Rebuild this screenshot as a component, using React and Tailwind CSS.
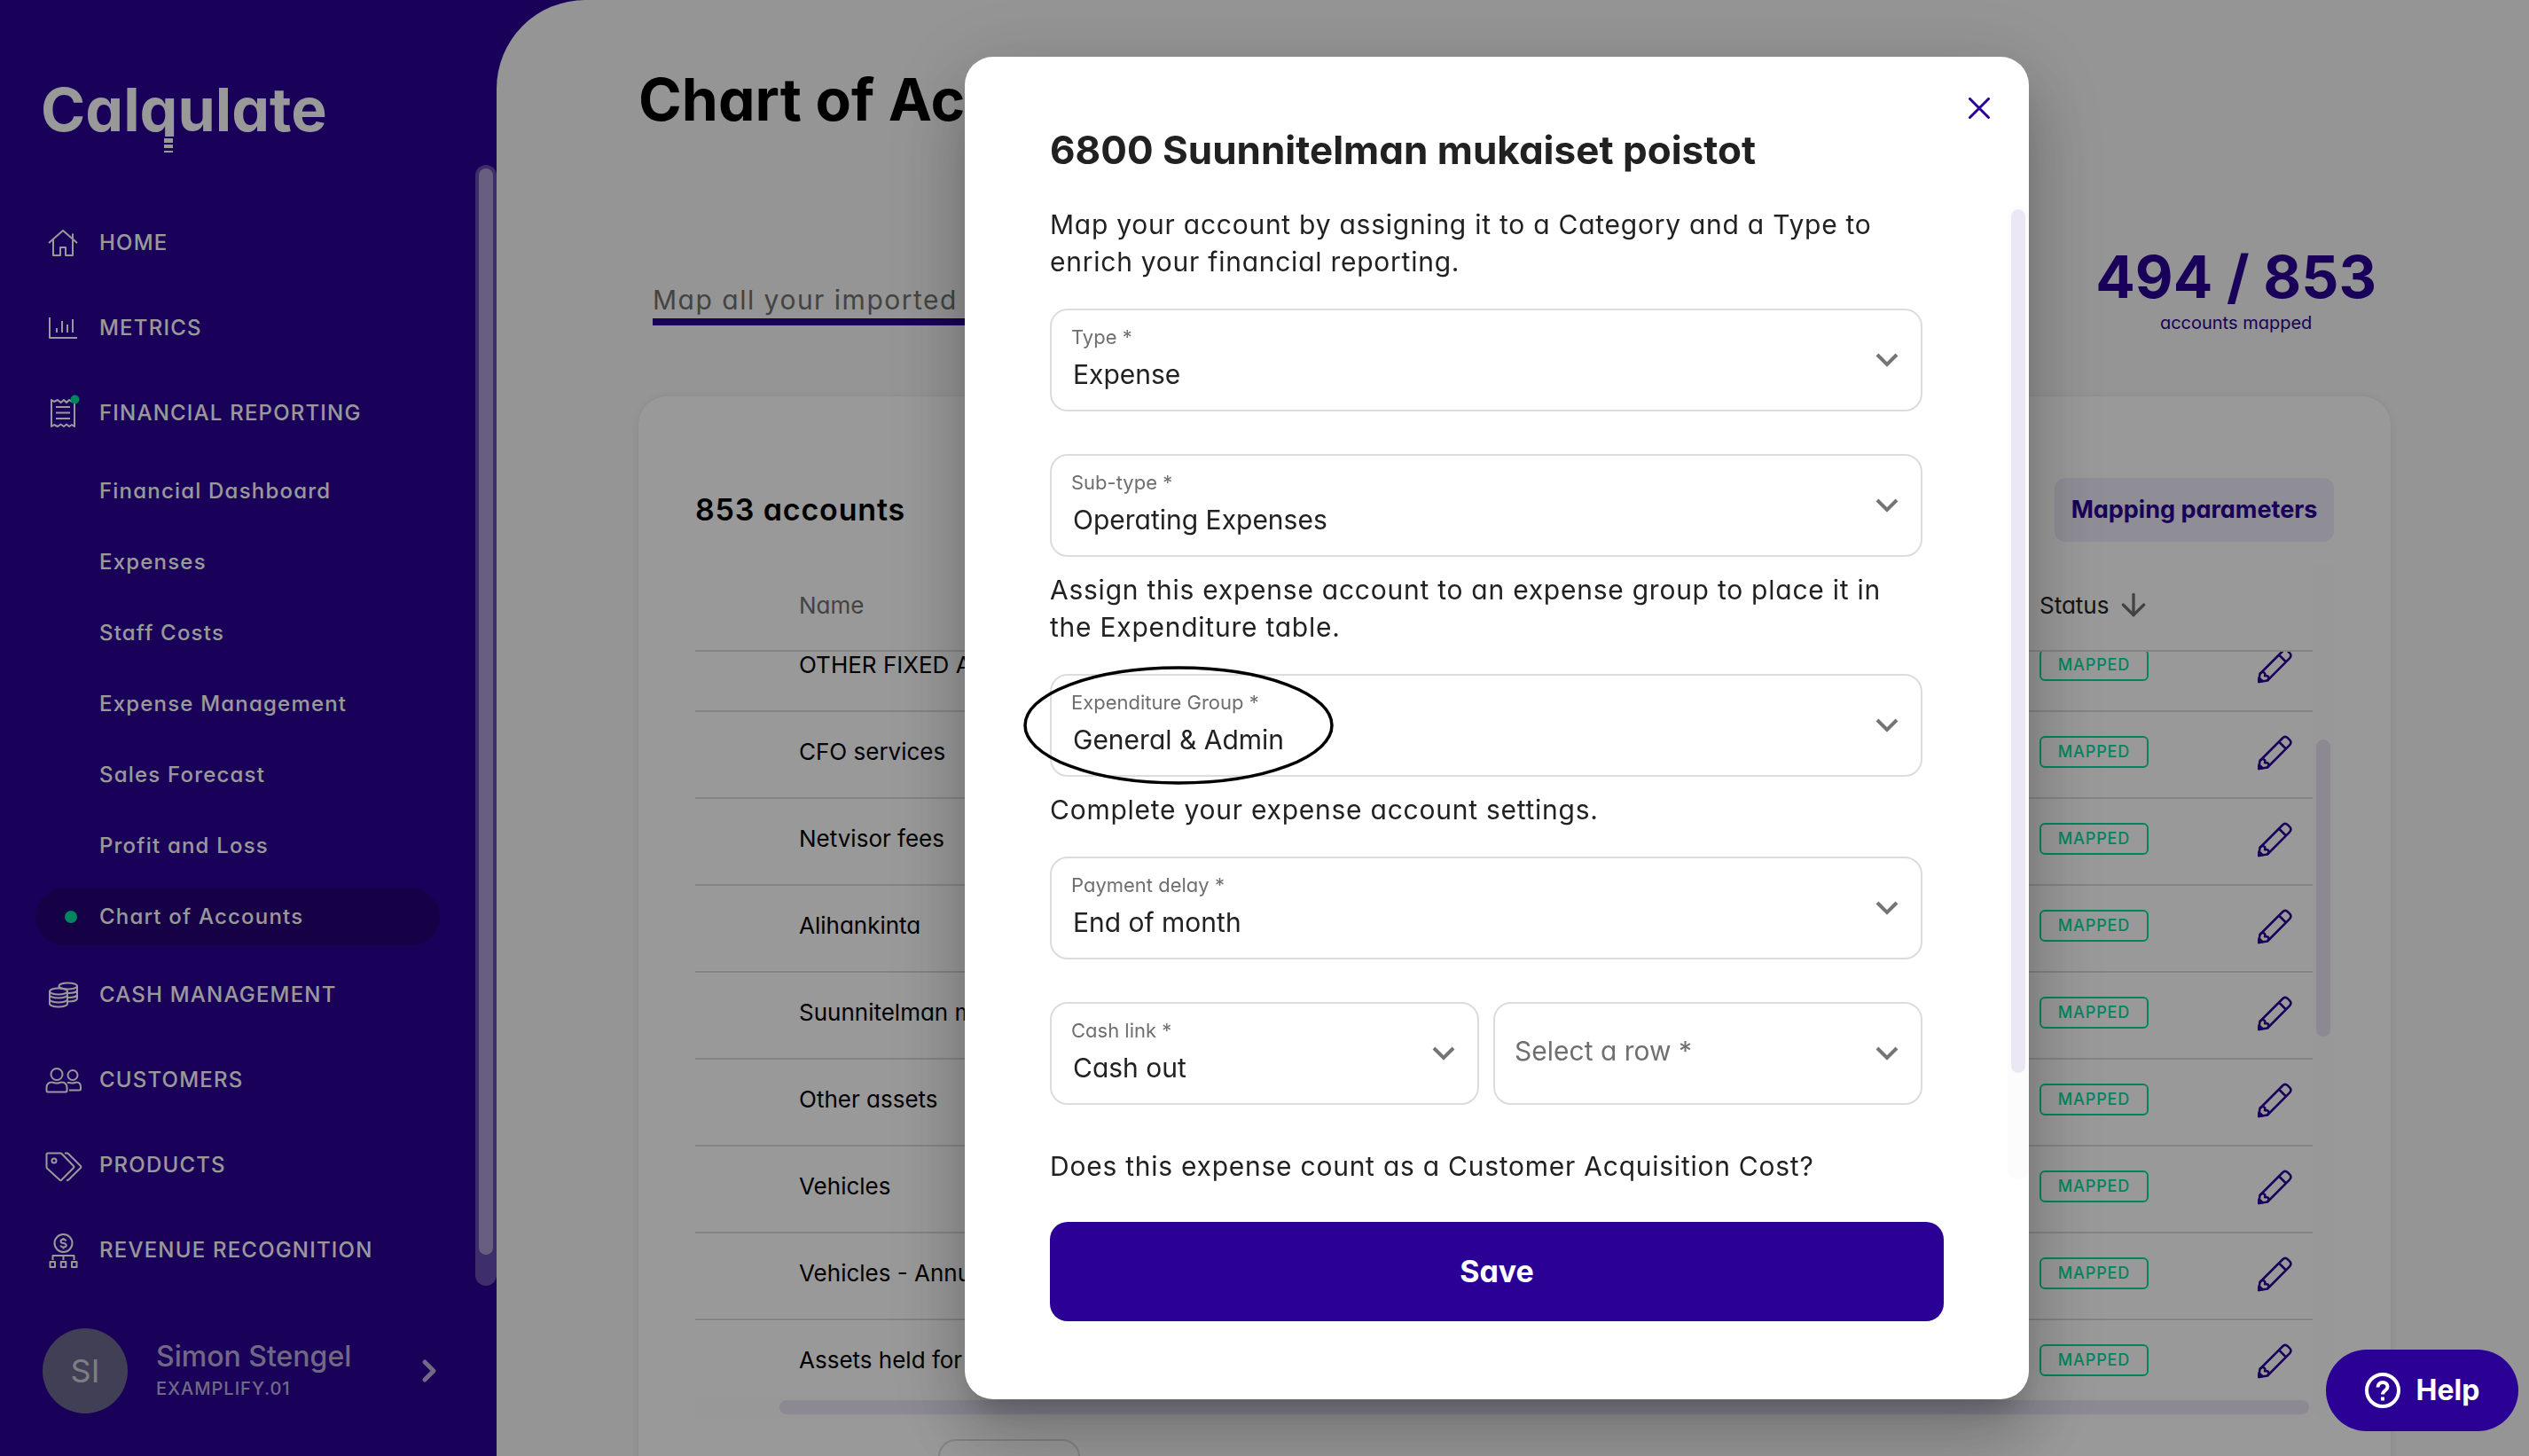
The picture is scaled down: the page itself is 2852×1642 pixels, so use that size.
import { useEffect, useRef } from "react"
import { ArrowDown, ChevronRight } from "lucide-react"

const reports = [
    'Financial Dashboard',
    'Expenses',
    'Staff Costs',
    'Expense Management',
    'Sales Forecast',
    'Profit and Loss',
    'Chart of Accounts',
]

const accounts = [
    'OTHER FIXED ASSETS',
    'CFO services',
    'Netvisor fees',
    'Alihankinta',
    'Suunnitelman muut',
    'Other assets',
    'Vehicles',
    'Vehicles - Annual',
    'Assets held for sale',
]

function Icon({ children }) {
    return (
        <svg viewBox="0 0 40 40" className="size-10 overflow-visible" fill="none" stroke="currentColor" strokeWidth="2" strokeLinejoin="round" aria-hidden="true">
            {children}
        </svg>
    )
}

const HomeIcon = () => (
    <Icon>
        <path d="M4 20 20 6l16 14M31 15.500V9.500M9 16.500V34h8v-9h6v9h8V16.500" />
    </Icon>
)

const MetricsIcon = () => (
    <Icon>
        <path d="M5 8v23h31M13 20v5M19 12v13M25 16v9M31 10v15" />
    </Icon>
)

const ReportIcon = () => (
    <Icon>
        <path d="M7 35V5l3 2 4-2 3.500 3L21 5l3 3 3-3 3 2 3-2v30l-3-2-3 2-3-2.500-3 2.500-3.500-2.500L14 35l-4-2zM12 13h16M12 19.500h16M12 26h16" />
        <circle cx="33.500" cy="4.500" r="5" fill="#00de9f" stroke="none" />
    </Icon>
)

const CashIcon = () => (
    <Icon>
        <ellipse cx="15" cy="16" rx="10" ry="3.500" />
        <path d="M5 16v14c0 2 4.500 3.500 10 3.500s10-1.500 10-3.500V16M5 20c0 2 4.500 3.500 10 3.500s10-1.500 10-3.500M5 25c0 2 4.500 3.500 10 3.500s10-1.500 10-3.500" />
        <path d="M15.500 12v-2c0-2 4.500-3.500 10.200-3.500S36 8 36 10v14c0 2-4 3.500-10 3.500M15.500 10c0 2 4.500 3.500 10.200 3.500S36 12 36 10M36 14.500c0 2-4 3.500-10 3.500M36 19.500c0 2-4 3.500-10 3.500" />
    </Icon>
)

const CustomersIcon = () => (
    <Icon>
        <circle cx="13" cy="13.500" r="6.500" />
        <path d="M1.500 32v-3c0-5 3-6.500 6-6.500 2 0 3 1 5.500 1s3.500-1 5.500-1c3 0 6 1.500 6 6.500v3c0 1-.500 1.500-1.500 1.500H3c-1 0-1.500-.500-1.500-1.500z" />
        <circle cx="31" cy="14.500" r="5.500" />
        <path d="M25 23c2.500-.500 4 .500 6 .500s2.500-1 4.500-1c3 0 4.500 2 4.500 5.500v2c0 1-.500 1.500-1.500 1.500H27" />
    </Icon>
)

const ProductsIcon = () => (
    <Icon>
        <path d="M1.500 22V8c0-1 .500-1.500 1.500-1.500h14c1 0 1.500.300 2 1l13 13.500c.800.800.800 1.200 0 2L18.500 36.500c-.800.800-1.500.800-2.300 0L2.500 24c-.700-.700-1-1.200-1-2z" />
        <circle cx="10" cy="15" r="2.500" />
        <path d="M22 6.500h2.500c.800 0 1.200.300 1.700.800L40 21c.700.700.700 1.300 0 2L26.500 36.300c-.700.700-1.500 1-2.500 1" />
    </Icon>
)

const RevenueIcon = () => (
    <Icon>
        <circle cx="20.500" cy="12" r="10" />
        <path d="M23.500 9.500c-.500-1.200-1.500-1.700-3-1.700-1.800 0-3 .800-3 2.100 0 3 6.200 1.300 6.200 4.300 0 1.300-1.300 2.200-3.200 2.200-1.700 0-2.800-.600-3.300-1.900M20.500 6v2M20.500 16.400v2" />
        <path d="M8.500 31v-5h24v5M20.500 25v6M5.500 33H11v6H5.500zM17.800 33h5.500v6h-5.500zM30 33h5.500v6H30z" />
    </Icon>
)

const PencilIcon = () => (
    <svg viewBox="0 0 40 40" className="size-10 overflow-visible" fill="none" stroke="currentColor" strokeWidth="2.500" strokeLinejoin="round" aria-hidden="true">
        <path d="M4.500 30 30 4.500c1.800-1.800 4-2 5.800-.300l2.500 2.500c1.600 1.700 1.500 3.600-.300 5.600L13 37.500 3.300 39zM26 8.500l8 8" />
        <path d="M4.500 30c1.500-2 3.500-2.500 4.700-1.500 1.400 1 1.400 2.500.800 3.700h2.500c2 0 2.500 3 .500 5.300" />
        <path d="M3.500 34.500 7.500 38l-4.200 1z" fill="currentColor" />
    </svg>
)

const Chevron = () => (
    <svg viewBox="0 0 26 16" className="h-4 w-[26px] shrink-0 text-[#757575]" fill="none" stroke="currentColor" strokeWidth="4" aria-hidden="true">
        <path d="M2 2l11 11L24 2" />
    </svg>
)

function NavItem({ icon, label }) {
    return (
        <a href="#" className="flex h-24 items-center gap-[21px] pl-[51px] text-2xl font-medium tracking-wider">
            {icon}
            {label}
        </a>
    )
}

function Sidebar() {
    return (
        <aside className="flex w-[560px] shrink-0 flex-col text-white">
            <div className="h-[186px] shrink-0 pt-[82px] pl-[46px]">
                <p className="text-[68px] leading-[82px] font-bold">
                    Cal
                    <span className="relative">
                        q
                        <svg viewBox="0 0 14 20" className="absolute right-[3px] bottom-[-10px] h-5 w-3.5" aria-hidden="true">
                            <path d="M0 0h14v20H0z" fill="#2a0095" />
                            <path d="M2 2h10v5H2zM2 9h10v4H2zM2 16h10v2H2z" fill="#fff" />
                        </svg>
                    </span>
                    ulate
                </p>
            </div>
            <div className="flex min-h-0 flex-1">
                <nav className="flex-1 overflow-hidden pt-10">
                    <NavItem icon={<HomeIcon />} label="HOME" />
                    <NavItem icon={<MetricsIcon />} label="METRICS" />
                    <NavItem icon={<ReportIcon />} label="FINANCIAL REPORTING" />
                    {reports.map((name) => (
                        <div key={name} className="flex h-20 items-center pr-10 pl-10">
                            <a
                                href="#"
                                className={`flex h-16 flex-1 items-center rounded-full pl-[33px] text-2xl font-medium tracking-wider ${name === 'Chart of Accounts' ? 'bg-[#250075]' : ''}`}
                            >
                                <span className={`mr-[25px] size-3.5 rounded-full ${name === 'Chart of Accounts' ? 'bg-[#00de9f]' : ''}`} />
                                {name}
                            </a>
                        </div>
                    ))}
                    <NavItem icon={<CashIcon />} label="CASH MANAGEMENT" />
                    <NavItem icon={<CustomersIcon />} label="CUSTOMERS" />
                    <NavItem icon={<ProductsIcon />} label="PRODUCTS" />
                    <NavItem icon={<RevenueIcon />} label="REVENUE RECOGNITION" />
                </nav>
                <div className="w-6 rounded-full bg-white/30 px-1 pt-1 pb-[35px]">
                    <div className="h-full rounded-full bg-white/45" />
                </div>
            </div>
            <button className="flex h-48 shrink-0 items-center pr-14 pl-12 text-left text-white/70">
                <span className="flex size-24 items-center justify-center rounded-full bg-[#6b698e] text-4xl">SI</span>
                <span className="ml-8 flex-1">
                    <span className="block text-[32px] leading-10 font-medium">Simon Stengel</span>
                    <span className="block text-xl leading-8 font-medium tracking-wider">EXAMPLIFY.01</span>
                </span>
                <ChevronRight className="size-10" strokeWidth={3} />
            </button>
        </aside>
    )
}

function AccountsTable() {
    const scroller = useRef(null)

    useEffect(() => {
        scroller.current.scrollTop = 30
    }, [])

    return (
        <div className="mt-6 flex">
            <div className="min-w-0 flex-1">
                <div ref={scroller} className="h-[940px] overflow-y-auto [scrollbar-width:none]">
                    <table className="w-full table-fixed border-separate border-spacing-0 text-left text-[26px]">
                        <thead>
                            <tr className="h-[100px]">
                                <th className="sticky top-0 border-b-2 border-[#dcdcdc] bg-white pb-1 pl-[117px] font-normal text-[#707070]">Name</th>
                                <th className="sticky top-0 w-[200px] border-b-2 border-[#dcdcdc] bg-white pb-1 font-normal">
                                    <span className="flex items-center gap-2 text-[#222]">
                                        Status
                                        <ArrowDown className="size-10 text-[#707070]" />
                                    </span>
                                </th>
                                <th className="sticky top-0 w-[108px] border-b-2 border-[#dcdcdc] bg-white" aria-label="Edit" />
                            </tr>
                        </thead>
                        <tbody>
                            {accounts.map((name) => (
                                <tr key={name} className="h-[98px]">
                                    <td className="border-b-2 border-[#dcdcdc] pb-2 pl-[117px]">{name}</td>
                                    <td className="border-b-2 border-[#dcdcdc] pb-1.5">
                                        <span className="flex h-9 w-[123px] items-center justify-center rounded-md border-2 border-[#00de9f] text-lg font-medium tracking-wider text-[#00de9f]">
                                            MAPPED
                                        </span>
                                    </td>
                                    <td className="border-b-2 border-[#dcdcdc] pr-6 pb-1.5">
                                        <button className="ml-auto block text-[#2a0095]" aria-label={`Edit ${name}`}>
                                            <PencilIcon />
                                        </button>
                                    </td>
                                </tr>
                            ))}
                        </tbody>
                    </table>
                </div>
                <div className="h-6 bg-[#fefefe] py-1 pr-1 pl-[95px]">
                    <div className="h-full rounded-full bg-[#e9e5f5]" />
                </div>
            </div>
            <div className="w-6 rounded-full bg-[#fdfdfd] px-1 pt-[199px]">
                <div className="h-[335px] rounded-full bg-[#e9e5f5]" />
            </div>
        </div>
    )
}

function Field({ id, label, value }) {
    return (
        <div className="flex h-[116px] flex-1 items-center rounded-[20px] border-2 border-[#dcdcdc] pr-[25px] pl-[22px]">
            <div className="flex min-w-0 flex-1 flex-col">
                {value && (
                    <label htmlFor={id} className="text-[22px] leading-8 text-[#6f6f6f]">
                        {label}
                    </label>
                )}
                <select
                    id={id}
                    aria-label={value ? undefined : label}
                    className={`w-full appearance-none bg-transparent text-[30px] leading-[52px] outline-none ${value ? 'px-0.5 text-[#212121]' : 'pb-1.5 text-[#6f6f6f]'}`}
                >
                    <option>{value || label}</option>
                </select>
            </div>
            <Chevron />
        </div>
    )
}

function MappingDialog() {
    return (
        <div className="fixed inset-0 flex justify-center bg-black/40 py-16 pr-9 pl-[560px]">
            <div
                role="dialog"
                aria-labelledby="dialog-title"
                className="flex w-full max-w-[1200px] flex-col rounded-[32px] bg-white pt-9 pb-[88px] text-[#212121] shadow-[0_22px_30px_-14px_rgba(0,0,0,0.2),0_48px_76px_6px_rgba(0,0,0,0.14),0_18px_92px_16px_rgba(0,0,0,0.12)]"
            >
                <div className="flex justify-end pr-[34px]">
                    <button className="flex size-11 items-center justify-center text-[#2a0095]" aria-label="Close">
                        <svg viewBox="0 0 24 24" className="size-6" fill="none" stroke="currentColor" strokeWidth="3" strokeLinecap="round">
                            <path d="M1.500 1.500l21 21M22.500 1.500l-21 21" />
                        </svg>
                    </button>
                </div>
                <h2 id="dialog-title" className="px-24 text-[44px] leading-[50px] font-bold">
                    6800 Suunnitelman mukaiset poistot
                </h2>
                <div className="mt-[38px] flex min-h-0 flex-1">
                    <div className="flex-1 overflow-hidden pr-24 pl-24 text-[30px] leading-[42px]">
                        <p className="tracking-wide">
                            Map your account by assigning it to a Category and a Type to
                            <br />
                            enrich your financial reporting.
                        </p>
                        <div className="mt-8 flex">
                            <Field id="type" label="Type *" value="Expense" />
                        </div>
                        <div className="mt-12 flex">
                            <Field id="subtype" label="Sub-type *" value="Operating Expenses" />
                        </div>
                        <p className="mt-4 tracking-wide">
                            Assign this expense account to an expense group to place it in
                            <br />
                            the Expenditure table.
                        </p>
                        <div className="relative mt-8 flex">
                            <Field id="group" label="Expenditure Group *" value="General & Admin" />
                            <svg viewBox="0 0 350 134" className="pointer-events-none absolute -top-[9px] -left-[30px] h-[134px] w-[350px]" fill="none" stroke="#000" strokeWidth="3.500" aria-hidden="true">
                                <ellipse cx="175" cy="67" rx="173" ry="65" />
                            </svg>
                        </div>
                        <p className="mt-4 tracking-wide">Complete your expense account settings.</p>
                        <div className="mt-8 flex">
                            <Field id="delay" label="Payment delay *" value="End of month" />
                        </div>
                        <div className="mt-12 flex gap-4">
                            <Field id="cash" label="Cash link *" value="Cash out" />
                            <Field id="row" label="Select a row *" />
                        </div>
                        <p className="mt-12 tracking-wide">Does this expense count as a Customer Acquisition Cost?</p>
                    </div>
                    <div className="mb-2 w-6 rounded-full bg-[#fcfcfc] px-1 pt-1 pb-[120px]">
                        <div className="h-full rounded-full bg-[#ebe7f5]" />
                    </div>
                </div>
                <div className="px-24 pt-10">
                    <button className="h-28 w-full rounded-[20px] bg-[#2a0095] pb-0.5 text-[34px] font-bold text-white">Save</button>
                </div>
            </div>
        </div>
    )
}

export default function App() {
    return (
        <div className="flex h-screen overflow-hidden bg-[#2a0095] font-['Inter',sans-serif] [font-feature-settings:'cv11']">
            <Sidebar />
            <main className="min-w-0 flex-1 rounded-tl-[100px] bg-[#f8f8f8] pt-[72px] pr-[156px] pl-40">
                <h1 className="text-[66px] leading-[80px] font-bold">Chart of Accounts</h1>
                <div className="mt-32 flex items-end justify-between pr-4 pl-4">
                    <p className="mb-[11px] w-[800px] border-b-8 border-[#2a0095] text-[30px] leading-[42px] tracking-wider text-[#707070]">Map all your imported accounts</p>
                    <div className="text-center text-[#2a0095]">
                        <p className="text-[66px] leading-[64px] font-bold">494 / 853</p>
                        <p className="mt-1.5 text-xl leading-7">accounts mapped</p>
                    </div>
                </div>
                <section className="mt-[69px] rounded-[32px] bg-white px-16 pt-[92px] shadow-[0_0_8px_rgba(0,0,0,0.08)]">
                    <div className="flex items-center justify-between">
                        <h2 className="pb-0.5 text-[34px] font-semibold tracking-wide">853 accounts</h2>
                        <button className="h-[72px] w-[315px] rounded-xl bg-[#eeebf8] text-[27px] font-bold text-[#2a0095]">Mapping parameters</button>
                    </div>
                    <AccountsTable />
                    <select aria-label="Rows per page" className="mt-6 ml-[274px] h-20 w-40 appearance-none rounded-[20px] border-2 border-[#dcdcdc] px-6 text-2xl">
                        <option>50</option>
                    </select>
                </section>
            </main>
            <MappingDialog />
            <button className="fixed right-3 bottom-7 flex h-[92px] w-[217px] items-center justify-center gap-[18px] rounded-full bg-[#2a0095] text-[32px] font-bold text-white">
                <svg viewBox="0 0 40 40" className="size-10" fill="none" stroke="currentColor" strokeWidth="4" aria-hidden="true">
                    <circle cx="20" cy="20" r="18" />
                    <path d="M14.500 16.500c0-3.500 2.500-5.500 5.500-5.500s5.500 2 5.500 5c0 4-5.500 4-5.500 8.500" />
                    <path d="M20 27.500v4" />
                </svg>
                Help
            </button>
        </div>
    )
}
